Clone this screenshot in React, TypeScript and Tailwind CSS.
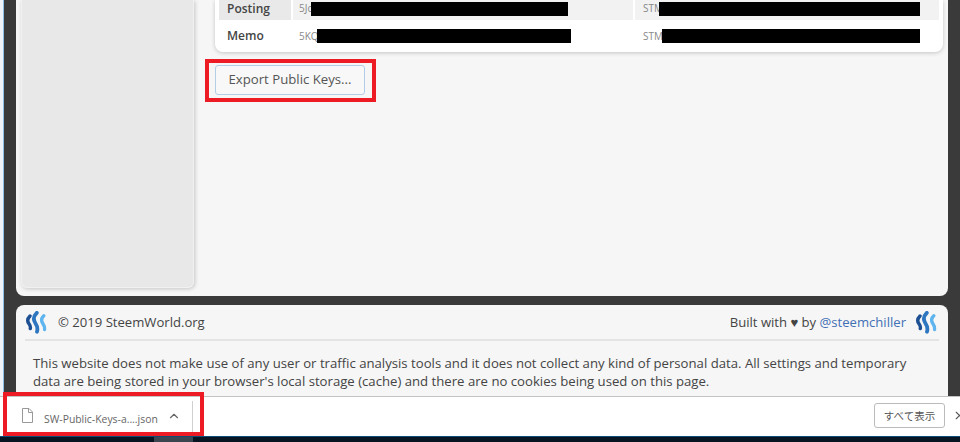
import React from 'react';
import { ChevronUp, X } from 'lucide-react';

function SteemLogo() {
  return (
    <svg width="23" height="23" viewBox="0 0 23 23" fill="none" strokeLinecap="round" className="shrink-0">
      <path d="M5 5C2 8 2 10 3.800 12.500C5.300 14.500 5.800 15.500 5.300 17.500" stroke="#1d4f93" strokeWidth="3.400" />
      <path d="M11.800 1.800C8 5.500 8 8.500 10.300 12C12.300 15 13 17.500 12 20.800" stroke="#2f76c0" strokeWidth="3.800" />
      <path d="M18.800 4.800C16 7.500 16 10 17.800 12.500C19.600 15 20 16.500 19.600 18.500" stroke="#5db4ee" strokeWidth="3.400" />
    </svg>
  );
}

function KeyRow({ label, priv, pub, gray, h, textPad }: { label: string; priv: React.ReactNode; pub: React.ReactNode; gray?: boolean; h: string; textPad: string }) {
  const cell = gray ? 'bg-[#f2f2f2]' : 'bg-white';
  return (
    <div className={`flex gap-[2px] ${h}`}>
      <div className={`flex w-[72px] items-center pl-[8px] text-[12px] font-semibold text-[#444] ${textPad} ${gray ? 'bg-[#e9e9e9]' : 'bg-white'}`}>{label}</div>
      <div className={`flex w-[340px] items-center pl-[6px] text-[10px] text-[#888] ${textPad} ${cell}`}>{priv}</div>
      <div className={`flex flex-1 items-center pl-[8px] text-[10px] text-[#888] ${textPad} ${cell}`}>{pub}</div>
    </div>
  );
}

export default function App() {
  return (
    <div className="relative flex h-[442px] w-[960px] flex-col overflow-hidden bg-[#3a3a3a] font-['Open_Sans',sans-serif] text-[13.100px] text-[#444]">
      <div className="flex min-h-0 flex-1">
        <div className="w-[4px] shrink-0 border-r border-[#8fc0e8] bg-[#f0f4f8]" />
        <div className="flex min-w-0 flex-1 flex-col gap-[9px] pl-[12px] pr-[12px]">
          <div className="flex h-[296px] shrink-0 gap-[21px] rounded-b-lg bg-[#f6f6f6] pl-[5px] pr-[5px]">
            <div className="mb-[8px] w-[173px] rounded-b-md border-x border-b border-[#f1f1f1] bg-[#e8e8e8] shadow-[1px_1px_4px_rgba(0,0,0,0.2)]" />
            <div className="flex flex-1 flex-col items-start">
              <div className="w-full rounded-b-lg bg-white px-[4px] pb-[4px] shadow-[0_1px_4px_rgba(0,0,0,0.2)]">
                <KeyRow
                  label="Posting"
                  gray
                  h="h-[20px]"
                  textPad="pb-[3px]"
                  priv={<><span className="shrink-0">5Jc</span><div className="ml-[-1px] h-[14px] w-[257px] bg-black" /></>}
                  pub={<><span className="shrink-0">STM</span><div className="ml-[-4px] h-[14px] w-[261px] bg-black" /></>}
                />
                <div className="h-[2px]" />
                <KeyRow
                  label="Memo"
                  h="h-[26px]"
                  textPad="pt-[2px]"
                  priv={<><span className="shrink-0">5KQ</span><div className="ml-[-2px] h-[14px] w-[254px] bg-black" /></>}
                  pub={<><span className="shrink-0">STM</span><div className="ml-[-1px] h-[14px] w-[258px] bg-black" /></>}
                />
              </div>
              <button className="mt-[13px] flex h-[30px] w-[150px] items-center justify-center rounded-[3px] border border-[#b4cde6] bg-[#f8f8f8] text-[13.200px] text-[#555]">
                Export Public Keys...
              </button>
            </div>
          </div>
          <div className="flex-1 rounded-t-lg bg-[#f6f6f6] px-[9px]">
            <div className="flex h-[36px] items-center justify-between border-b-2 border-[#e4e4e4] pr-[1px] pt-[1px]">
              <div className="flex items-center gap-[10px]">
                <SteemLogo />
                <span>© 2019 SteemWorld.org</span>
              </div>
              <div className="flex items-center gap-[9px]">
                <span>
                  Built with ♥ by <span className="text-[#3f6fb5]">@steemchiller</span>
                </span>
                <SteemLogo />
              </div>
            </div>
            <p className="mt-[13px] px-[8px] text-[13.160px] leading-[18px]">
              This website does not make use of any user or traffic analysis tools and it does not collect any kind of personal data. All settings and temporary data are being stored in your browser's local storage (cache) and there are no cookies being used on this page.
            </p>
          </div>
        </div>
      </div>

      <div className="flex h-[40px] shrink-0 items-center border-t border-[#c4c4c4] bg-white">
        <div className="flex h-[32px] w-[193px] shrink-0 items-center border-r border-[#cfcfcf] pl-[22px]">
          <svg width="11" height="15" viewBox="0 0 11 15" fill="none" className="mb-[2px] shrink-0">
            <path d="M0.500 0.500H7L10.500 4V14.500H0.500Z" fill="#fff" stroke="#999" />
            <path d="M6.500 0.500V4.500H10.500" stroke="#999" />
          </svg>
          <span className="ml-[11px] mt-[6px] w-[125px] text-[10.400px] text-[#666]">SW-Public-Keys-a....json</span>
          <ChevronUp size={14} strokeWidth={2} className="mb-[1px] ml-[-2px] text-[#666]" />
        </div>
        <div className="flex-1" />
        <button className="mt-[-2px] flex h-[25px] w-[71px] items-center justify-center rounded-[3px] border border-[#bbb] bg-white font-['Noto_Sans_CJK_JP',sans-serif] text-[10.500px] text-[#555]">
          すべて表示
        </button>
        <X size={13} strokeWidth={2} className="ml-[8px] mr-[-6px] mt-[-2px] shrink-0 text-[#555]" />
      </div>

      <div className="flex h-[6px] shrink-0 border-t border-[#0e4c78] bg-[#071522]">
        <div className="ml-[154px] h-full w-[39px] bg-[#3c4650]" />
      </div>

      {/* red annotation boxes */}
      <div className="absolute left-[205px] top-[59px] h-[43px] w-[171px] border-[4px] border-[#ed1c24]" />
      <div className="absolute left-[3px] top-[392px] h-[44px] w-[201px] border-[4px] border-[#ed1c24]" />
    </div>
  );
}
